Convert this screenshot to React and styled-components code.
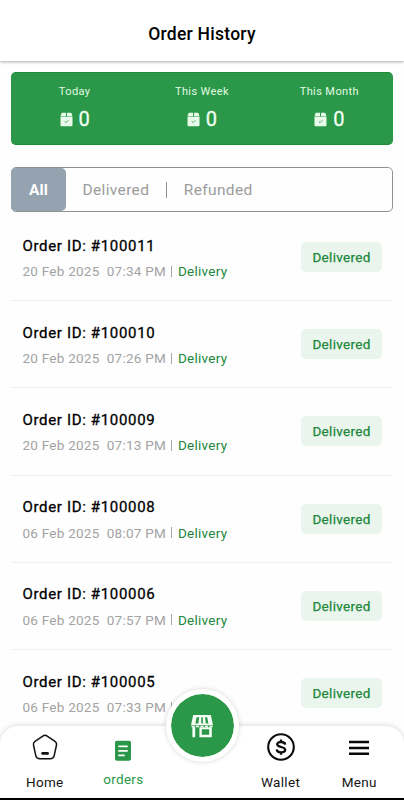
import React from "react";
import styled, { createGlobalStyle } from "styled-components";

const GlobalStyle = createGlobalStyle`
  * { box-sizing: border-box; }
  body { margin: 0; background: #fefefe; font-family: Roboto, sans-serif; overflow: hidden; }
`;

const Screen = styled.div`
  position: relative;
  width: 404px;
  height: 800px;
  overflow: hidden;
  background: #fefefe;
  color: #000;
`;

const Header = styled.header`
  height: 61px;
  padding-top: 6px;
  display: flex;
  align-items: center;
  justify-content: center;
  background: #fff;
  box-shadow: 0 1px 3px rgba(0, 0, 0, 0.32);
`;

const Title = styled.h1`
  margin: 0;
  font-size: 17.5px;
  line-height: 24px;
  font-weight: 500;
  letter-spacing: 0.25px;
`;

const Summary = styled.section`
  margin: 11px 11px 0;
  height: 73px;
  padding-top: 12px;
  display: grid;
  grid-template-columns: repeat(3, 1fr);
  background: #2a9848;
  border: 1px solid #1f8b3b;
  border-width: 1px 0;
  border-radius: 5px;
  color: #f2fff3;
`;

const Stat = styled.div`
  display: flex;
  flex-direction: column;
  align-items: center;
`;

const StatLabel = styled.span`
  font-size: 11px;
  line-height: 14px;
  letter-spacing: 0.4px;
  color: #e2fae4;
`;

const StatValue = styled.div`
  margin-top: 7px;
  display: flex;
  align-items: center;
  gap: 6px;
  font-size: 20px;
  line-height: 26px;
  font-weight: 400;
  -webkit-text-stroke: 0.3px currentColor;
`;

const Tabs = styled.nav`
  margin: 22px 11px 0;
  height: 45px;
  display: flex;
  align-items: center;
  border: 1px solid #8f9396;
  border-radius: 5px;
  font-size: 15.5px;
`;

const ActiveTab = styled.div`
  width: 55px;
  height: 43px;
  margin-left: -1px;
  display: flex;
  align-items: center;
  justify-content: center;
  border-radius: 5px;
  background: #95a2af;
  color: #fff;
  font-weight: 700;
  letter-spacing: 0.2px;
`;

const Tab = styled.div`
  padding: 0 17px 0 16.5px;
  color: #9c9c9c;
  letter-spacing: 0.35px;
`;

const TabDivider = styled.div`
  width: 1px;
  height: 16px;
  background: #8f8f8f;
`;

const List = styled.main`
  margin: 2px 11px 0;
`;

const Row = styled.article`
  height: 87.2px;
  padding: 0 11px 0 11.5px;
  display: flex;
  align-items: center;
  justify-content: space-between;
  border-bottom: 1px solid #f0f0f0;
`;

const OrderId = styled.div`
  padding-top: 1.5px;
  font-size: 15px;
  line-height: 20px;
  font-weight: 400;
  letter-spacing: 0.66px;
  -webkit-text-stroke: 0.3px currentColor;
`;

const OrderMeta = styled.div`
  margin-top: 6.5px;
  display: flex;
  align-items: center;
  font-size: 13.5px;
  line-height: 18px;
  letter-spacing: 0.25px;
  white-space: pre;
  color: #a3a3a3;
`;

const MetaDivider = styled.span`
  width: 1px;
  height: 11px;
  margin: 0 6px 0 5px;
  background: #a6a6a6;
`;

const OrderType = styled.span`
  color: #20873b;
`;

const Badge = styled.div`
  width: 81px;
  height: 30px;
  display: flex;
  align-items: center;
  justify-content: center;
  border-radius: 5px;
  background: #eaf5ed;
  color: #20873b;
  font-size: 13.5px;
  font-weight: 400;
  letter-spacing: 0.3px;
  -webkit-text-stroke: 0.25px currentColor;
`;

const BottomBar = styled.nav`
  position: absolute;
  left: 0;
  right: 0;
  bottom: 0;
  height: 74px;
  padding: 0 5.5px;
  display: grid;
  grid-template-columns: repeat(5, 1fr);
  background: #fff;
  border-bottom: 2px solid #000;
  border-radius: 18px 18px 0 0;
  box-shadow: 0 -1px 5px rgba(0, 0, 0, 0.14);
`;

const NavItem = styled.div`
  display: flex;
  flex-direction: column;
  align-items: center;
  padding-top: ${(p) => (p.$active ? 10 : 7)}px;
  font-size: 13.5px;
  line-height: 18px;
  letter-spacing: 0.3px;
  color: ${(p) => (p.$active ? "#2a9848" : "#151515")};

  svg { display: block; margin-bottom: ${(p) => (p.$active ? 6 : 12)}px; }
`;

const StoreButton = styled.button`
  position: absolute;
  left: 165.5px;
  top: 689px;
  width: 73px;
  height: 73px;
  padding: 0;
  display: flex;
  align-items: center;
  justify-content: center;
  border: 5px solid #fff;
  border-radius: 50%;
  background: #2a9848;
  background-clip: padding-box;
  box-shadow: 0 0 5px rgba(0, 0, 0, 0.16);
`;

const PackageIcon = () => (
  <svg width="13" height="15" viewBox="0 0 13 15">
    <path fill="#e8fbea" d="M2.2.7H6v3.6H.5L1.4 1.4Q1.6.7 2.2.7ZM7 .7h3.7q.7 0 .9.7l.9 2.9H7ZM.5 4.7h12v8.5q0 1.1-1.1 1.1H1.6q-1.1 0-1.1-1.1Z" />
    <path fill="none" stroke="#4b9e60" strokeWidth=".9" d="m4.7 9.4 1.4 1.2 2.4-2.4" />
  </svg>
);

const HomeIcon = () => (
  <svg width="28" height="28" viewBox="0 0 28 28" fill="none" stroke="#111" strokeLinejoin="round" strokeLinecap="round">
    <path strokeWidth="1.5" d="M11.8 3.1Q14 1.6 16.2 3.1L24 8.3Q26 9.6 25.5 12L23.2 22.6Q22.4 25.8 19.2 25.8H8.8Q5.6 25.8 4.8 22.6L2.5 12Q2 9.6 4 8.3Z" />
    <path strokeWidth="2.7" d="M11.6 20.4h5" />
  </svg>
);

const OrdersIcon = () => (
  <svg width="28" height="28" viewBox="0 0 28 28">
    <rect x="6" y="4.8" width="16" height="20" rx="1.8" fill="#2a9848" />
    <path stroke="#fff" strokeWidth="1.8" d="M9.3 10.3h9.4M9.3 14.8h9.4M9.3 19.3h6.4" />
  </svg>
);

const WalletIcon = () => (
  <svg width="28" height="28" viewBox="0 0 28 28" fill="none" stroke="#0b0b0b">
    <circle cx="14" cy="14" r="12.8" strokeWidth="2.1" />
    <path strokeWidth="2.3" d="M14 6.5v3M14 18.7v3M18.2 11.6C17.8 8.3 10.2 8.1 10.2 11.3c0 3.5 8 1.9 8 5.6 0 3.5-8.1 3.3-8.5-.5" />
  </svg>
);

const MenuIcon = () => (
  <svg width="28" height="28" viewBox="0 0 28 28">
    <path stroke="#080808" strokeWidth="2.5" d="M4 9h20M4 15h20M4 20.8h20" />
  </svg>
);

const StoreIcon = () => (
  <svg width="24" height="24" viewBox="0 0 24 24">
    <path
      fill="#f5fff5"
      fillRule="evenodd"
      d="M3.2 1H20.8L23 11.2H1ZM6.6 3.2 5.4 9.4H8.4L9.2 3.2ZM11.3 3.2V9.4H12.9V3.2ZM15 3.2 15.8 9.4H18.4L17.2 3.2Z"
    />
    <path fill="none" stroke="#f5fff5" strokeWidth="1.5" strokeDasharray="3 1.5" d="M1.5 12.4h21" />
    <path
      fill="#f5fff5"
      fillRule="evenodd"
      d="M2.4 12.4H5.2V23.2H2.4ZM9.4 13.2H21.8V23.2H9.4ZM11.8 15.2V20.8H19.2V15.2Z"
    />
  </svg>
);

const stats = ["Today", "This Week", "This Month"];

const orders = [
  { id: "100011", when: "20 Feb 2025  07:34 PM" },
  { id: "100010", when: "20 Feb 2025  07:26 PM" },
  { id: "100009", when: "20 Feb 2025  07:13 PM" },
  { id: "100008", when: "06 Feb 2025  08:07 PM" },
  { id: "100006", when: "06 Feb 2025  07:57 PM" },
  { id: "100005", when: "06 Feb 2025  07:33 PM" },
];

export default function App() {
  return (
    <Screen>
      <GlobalStyle />
      <Header><Title>Order History</Title></Header>
      <Summary>
        {stats.map((label) => (
          <Stat key={label}>
            <StatLabel>{label}</StatLabel>
            <StatValue><PackageIcon />0</StatValue>
          </Stat>
        ))}
      </Summary>
      <Tabs>
        <ActiveTab>All</ActiveTab>
        <Tab>Delivered</Tab>
        <TabDivider />
        <Tab>Refunded</Tab>
      </Tabs>
      <List>
        {orders.map((o) => (
          <Row key={o.id}>
            <div>
              <OrderId>Order ID: #{o.id}</OrderId>
              <OrderMeta>
                {o.when}
                <MetaDivider />
                <OrderType>Delivery</OrderType>
              </OrderMeta>
            </div>
            <Badge>Delivered</Badge>
          </Row>
        ))}
      </List>
      <BottomBar>
        <NavItem><HomeIcon />Home</NavItem>
        <NavItem $active><OrdersIcon />orders</NavItem>
        <span />
        <NavItem><WalletIcon />Wallet</NavItem>
        <NavItem><MenuIcon />Menu</NavItem>
      </BottomBar>
      <StoreButton aria-label="Store"><StoreIcon /></StoreButton>
    </Screen>
  );
}
